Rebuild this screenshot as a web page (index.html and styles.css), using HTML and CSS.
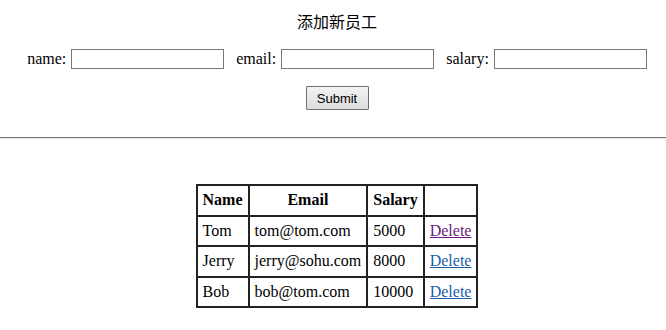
FILE: index.html
```html
<!DOCTYPE html>
<html lang="zh">
<head>
    <meta charset="UTF-8">
    <title>添加新员工</title>
    <link rel="stylesheet" href="styles.css">
</head>
<body>
    <div class="add-box">
        <h3 class="title">添加新员工</h3>
        <form class="emp-form">
            <div class="fields">
                <label class="field">name: <input type="text" class="txt"></label>
                <label class="field">email: <input type="text" class="txt"></label>
                <label class="field">salary: <input type="text" class="txt"></label>
            </div>
            <div class="actions">
                <button type="button" class="submit">Submit</button>
            </div>
        </form>
    </div>

    <hr class="line">

    <div class="list-box">
        <table class="emp-table">
            <tr>
                <th>Name</th>
                <th>Email</th>
                <th>Salary</th>
                <th></th>
            </tr>
            <tr>
                <td>Tom</td>
                <td>tom@tom.com</td>
                <td>5000</td>
                <td><a href="#" class="visited">Delete</a></td>
            </tr>
            <tr>
                <td>Jerry</td>
                <td>jerry@sohu.com</td>
                <td>8000</td>
                <td><a href="#">Delete</a></td>
            </tr>
            <tr>
                <td>Bob</td>
                <td>bob@tom.com</td>
                <td>10000</td>
                <td><a href="#">Delete</a></td>
            </tr>
        </table>
    </div>
</body>
</html>
```

FILE: styles.css
```css
body {
    margin: 0;
    font-family: "Liberation Serif", "Times New Roman", serif;
    font-size: 16px;
    color: #000;
    background: #fff;
}
.add-box {
    padding-left: 8px;
    text-align: center;
}
.title {
    margin: 0;
    padding-top: 11px;
    height: 20px;
    line-height: 20px;
    font-family: "Noto Sans CJK SC", "Noto Sans", sans-serif;
    font-size: 16px;
    font-weight: normal;
}
.emp-form {
    margin: 0;
}
.fields {
    display: flex;
    justify-content: center;
    gap: 12px;
    margin-top: 18px;
    height: 20px;
    align-items: center;
}
.field {
    display: flex;
    align-items: center;
    gap: 5px;
}
.txt {
    box-sizing: border-box;
    width: 153px;
    height: 20px;
    margin: 0;
    padding: 1px 2px;
    border: 1px solid #767676;
    background: #fff;
}
.actions {
    margin-top: 17px;
    height: 24px;
}
.submit {
    box-sizing: border-box;
    width: 63px;
    height: 24px;
    margin: 0;
    padding: 0;
    font-family: "Liberation Sans", Arial, sans-serif;
    font-size: 13px;
    color: #000;
    background: linear-gradient(#f3f3f3, #dcdcdc);
    border: 1px solid #707070;
    border-radius: 1px;
}
.line {
    margin: 27px 0 0;
    border: 0;
    border-top: 1px solid #777;
    border-bottom: 1px solid #e8e8e8;
    height: 0;
}
.list-box {
    padding: 45px 0 0 8px;
    display: flex;
    justify-content: center;
}
.emp-table {
    border-collapse: collapse;
    border: 2px solid #222;
}
.emp-table th,
.emp-table td {
    border: 2px solid #222;
    height: 26.5px;
    padding: 1px 5px;
    text-align: left;
}
.emp-table th {
    text-align: center;
    font-weight: bold;
}
.emp-table a {
    color: #1a5ea8;
}
.emp-table a.visited {
    color: #6b1a7a;
}
```
